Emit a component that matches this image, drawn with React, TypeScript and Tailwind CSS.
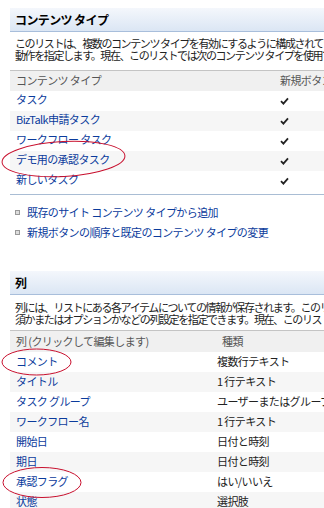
import React from "react";

const font = { fontFamily: '"Noto Sans CJK JP", "Noto Sans", sans-serif' };

function Check() {
  return (
    <svg width="9" height="8" viewBox="0 0 9 8" className="block">
      <path d="M1 4.2 L3.4 6.6 L8 1.4" fill="none" stroke="#222" strokeWidth="1.8" />
    </svg>
  );
}

function HeaderBar({ title }: { title: string }) {
  return (
    <div className="h-[24px] bg-gradient-to-b from-[#f4f7fc] to-[#dbe6f4] border-b border-[#a8bedb] flex items-center pl-[5px]">
      <span className="text-[12px] font-bold text-black leading-none">{title}</span>
    </div>
  );
}

export default function App() {
  const ctRows = ["タスク", "BizTalk申請タスク", "ワークフロー タスク", "デモ用の承認タスク", "新しいタスク"];
  const colRows: [string, string][] = [
    ["コメント", "複数行テキスト"],
    ["タイトル", "1 行テキスト"],
    ["タスク グループ", "ユーザーまたはグループ"],
    ["ワークフロー名", "1 行テキスト"],
    ["開始日", "日付と時刻"],
    ["期日", "日付と時刻"],
    ["承認フラグ", "はい/いいえ"],
    ["状態", "選択肢"],
  ];
  return (
    <div className="relative w-[324px] h-[508px] overflow-hidden bg-white" style={font}>
      <div className="w-[480px] pt-[8px] pl-[10px] text-[11px] tracking-[-0.6px]">
        <HeaderBar title="コンテンツ タイプ" />
        <div className="pl-[5px] pt-[5px] leading-[12px] text-[#222] whitespace-nowrap tracking-[-1.4px]">
          <div>このリストは、複数のコンテンツ タイプを有効にするように構成されています。コンテンツ タイプを使用して、</div>
          <div>動作を指定します。現在、このリストでは次のコンテンツ タイプを使用できます:</div>
        </div>
        <div className="mt-[9px] border-t border-[#c4c4c4]">
          <div className="h-[20px] bg-[#f0f0f0] flex items-center text-[#555] pb-[1px]">
            <div className="w-[270px] pl-[6px]">コンテンツ タイプ</div>
            <div>新規ボタンに表示</div>
          </div>
          {ctRows.map((r, i) => (
            <div key={r} className={`h-[20px] flex items-center pb-[3px] ${i % 2 === 1 ? "bg-[#f6f6f6]" : ""}`}>
              <div className="w-[270px] pl-[6px] text-[#0b3b9c]">{r}</div>
              <div className="pt-[2px]"><Check /></div>
            </div>
          ))}
          <div className="h-[3px]" />
          <div className="border-t border-[#a9bdd4]" />
        </div>
        <div className="pt-[11px] flex flex-col gap-[8px] text-[#0b3b9c]">
          {["既存のサイト コンテンツ タイプから追加", "新規ボタンの順序と既定のコンテンツ タイプの変更"].map((t) => (
            <div key={t} className="h-[12px] flex items-center">
              <span className="ml-[5px] mr-[7px] w-[5px] h-[5px] border border-[#999] bg-[#ddd]" />
              <span>{t}</span>
            </div>
          ))}
        </div>
        <div className="mt-[33px]">
          <HeaderBar title="列" />
        </div>
        <div className="pl-[5px] pt-[6px] leading-[12px] text-[#222] whitespace-nowrap tracking-[-1.4px]">
          <div>列には、リストにある各アイテムについての情報が保存されます。このリストでは次の列を使用でき</div>
          <div>須かまたはオプションかなどの列設定を指定できます。現在、このリストでは次の列を使用できます:</div>
        </div>
        <div className="mt-[5px] border-t border-[#c4c4c4]">
          <div className="h-[21px] bg-[#f0f0f0] flex items-center text-[#555] pb-[1px]">
            <div className="w-[212px] pl-[6px]">列 (クリックして編集します)</div>
            <div>種類</div>
          </div>
          {colRows.map(([a, b], i) => (
            <div key={a} className={`h-[20px] flex items-center pb-[1px] ${i % 2 === 1 ? "bg-[#f6f6f6]" : ""}`}>
              <div className="w-[207px] pl-[6px] text-[#0b3b9c]">{a}</div>
              <div className="text-[#222]">{b}</div>
            </div>
          ))}
        </div>
      </div>
      <svg className="absolute inset-0 pointer-events-none" width="324" height="508">
        <ellipse cx="63.5" cy="159" rx="61.5" ry="17.5" fill="none" stroke="#c8102e" strokeWidth="1" transform="rotate(-3 63.5 159)" />
        <ellipse cx="36.5" cy="362" rx="34.5" ry="13" fill="none" stroke="#c8102e" strokeWidth="1" />
        <ellipse cx="42" cy="482.5" rx="39" ry="15" fill="none" stroke="#c8102e" strokeWidth="1" />
      </svg>
    </div>
  );
}
